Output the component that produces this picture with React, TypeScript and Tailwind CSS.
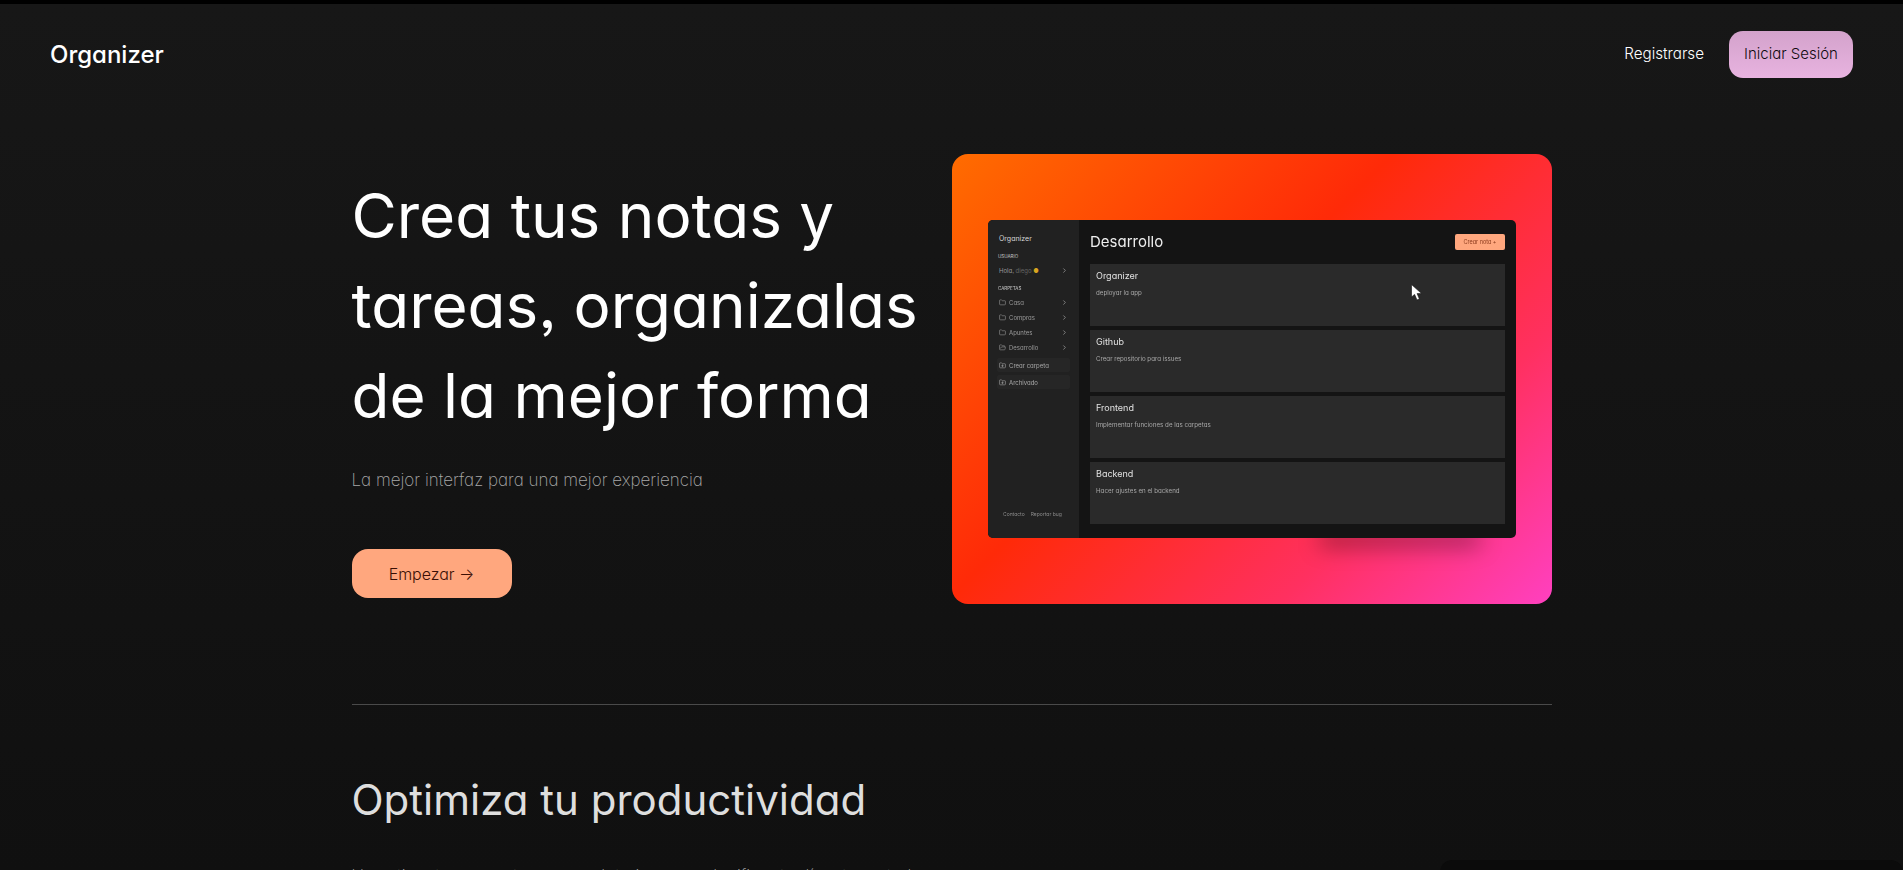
import { ChevronRight, Folder, FolderOpen, FolderPlus } from 'lucide-react';

const folders = [
  { name: 'Casa', open: false },
  { name: 'Compras', open: false },
  { name: 'Apuntes', open: false },
  { name: 'Desarrollo', open: true },
];

const notes = [
  { title: 'Organizer', text: 'deployar la app' },
  { title: 'Github', text: 'Crear repositorio para issues' },
  { title: 'Frontend', text: 'Implementar funciones de las carpetas' },
  { title: 'Backend', text: 'Hacer ajustes en el backend' },
];

function AppPreview() {
  return (
    <div className="relative w-[528px] h-[318px]">
      <div className="absolute -bottom-[8px] right-[36px] h-[14px] w-[160px] bg-black/40 blur-[11px]" />
      <div className="relative flex h-full overflow-hidden rounded-[5px] bg-[#141414] blur-[0.4px]">
        <aside className="flex w-[91px] shrink-0 flex-col bg-[#212121] pt-[14px]">
          <p className="ml-[11px] h-[10px] text-[7px] leading-[10px] text-[#d8d8d8]">Organizer</p>
          <p className="ml-[10px] mt-[10px] h-[6px] text-[4.5px] leading-[6px] text-[#c8c8c8]">USUARIO</p>
          <div className="mt-[5px] flex h-[10px] items-center justify-between pl-[11px] pr-[11px] text-[6px] text-[#9a9a9a]">
            <span>
              Hola, <span className="text-[#666]">diego</span> <span className="text-[#d9a520]">●</span>
            </span>
            <ChevronRight className="h-[7px] w-[7px] text-[#bbb]" />
          </div>
          <p className="ml-[10px] mt-[11px] h-[6px] text-[4.5px] leading-[6px] text-[#c8c8c8]">CARPETAS</p>
          <div className="mt-[3px]">
            {folders.map((f) => (
              <div key={f.name} className="flex h-[15px] items-center justify-between pl-[11px] pr-[11px] text-[6px] text-[#9a9a9a]">
                <span className="flex items-center gap-[3px]">
                  {f.open ? <FolderOpen className="h-[7px] w-[7px]" /> : <Folder className="h-[7px] w-[7px]" />}
                  {f.name}
                </span>
                <ChevronRight className="h-[7px] w-[7px] text-[#bbb]" />
              </div>
            ))}
          </div>
          {['Crear carpeta', 'Archivado'].map((label) => (
            <div
              key={label}
              className="mx-[9px] mt-[3px] flex h-[14px] items-center gap-[3px] rounded-[2px] bg-[#262626] pl-[2px] text-[6px] text-[#a8a8a8]"
            >
              <FolderPlus className="h-[7px] w-[7px]" />
              {label}
            </div>
          ))}
          <div className="mt-auto flex gap-[6px] pb-[21px] pl-[15px] text-[5px] leading-[6px] text-[#8a8a8a]">
            <span>Contacto</span>
            <span>Reportar bug</span>
          </div>
        </aside>
        <main className="flex-1 px-[11px] pt-[14px]">
          <div className="flex h-[16px] items-center justify-between">
            <h3 className="text-[15px] text-[#eeeeee]">Desarrollo</h3>
            <button className="h-[16px] w-[50px] rounded-[2px] bg-[#ffa77e] text-[5.5px] text-[#8a3a1c]">Crear nota +</button>
          </div>
          <div className="mt-[14px] flex flex-col gap-[4px]">
            {notes.map((n) => (
              <div key={n.title} className="h-[62px] bg-[#2a2a2a] px-[6px] pt-[6px]">
                <p className="h-[12px] text-[9px] leading-[12px] text-[#e2e2e2]">{n.title}</p>
                <p className="mt-[7px] h-[8px] text-[6.2px] leading-[8px] text-[#a8a8a8]">{n.text}</p>
              </div>
            ))}
          </div>
        </main>
      </div>
      {/* mouse pointer caught in the recording */}
      <svg className="absolute left-[423px] top-[64px] h-[17px] w-[12px]" viewBox="0 0 12 17">
        <path d="M0.5 0.5 L0.5 13 L3.6 10.4 L6 16 L8.4 15 L6.1 9.6 L10.6 9.6 Z" fill="#fff" stroke="#111" strokeWidth="0.6" />
      </svg>
    </div>
  );
}

export default function App() {
  return (
    <div className="h-screen overflow-hidden border-t-4 border-black bg-gradient-to-b from-[#171717] to-[#101010] [font-family:Inter,sans-serif] [font-feature-settings:'cv11','ss03']">
      <header className="flex items-center justify-between px-[50px] pt-[27px]">
        <span className="text-[24px] font-medium text-white">Organizer</span>
        <div className="flex items-center gap-[25px]">
          <a className="text-[15.2px] font-light text-white">Registrarse</a>
          <button className="h-[47px] w-[124px] rounded-[14px] bg-gradient-to-b from-[#d3a2cb] to-[#e8b3e0] text-[15px] font-light text-[#0f0a0e]">
            Iniciar Sesión
          </button>
        </div>
      </header>

      <div className="mx-auto w-[1200px]">
        <section className="mt-[76px] flex justify-between">
          <div className="pt-[17px]">
            <h1 className="text-[62px] leading-[90px] text-white">
              Crea tus notas y
              <br />
              tareas, organizalas
              <br />
              de la mejor forma
            </h1>
            <p className="mt-[26px] text-[17px] leading-[27px] font-extralight text-[#a8a8a8]">La mejor interfaz para una mejor experiencia</p>
            <button className="mt-[55px] h-[49px] w-[160px] rounded-[16px] bg-[#ffa77e] text-[16px] font-light text-[#3a0f05]">Empezar →</button>
          </div>
          <div className="flex h-[450px] w-[600px] items-center justify-center rounded-[16px] bg-[linear-gradient(135deg,#ff6c00_0%,#ff2a08_42%,#ff3060_74%,#ff40c0_100%)] pl-[1px]">
            <AppPreview />
          </div>
        </section>

        <hr className="mt-[100px] border-t border-[#4a4a4a]" />

        <section className="mt-[65px]">
          <h2 className="text-[42px] leading-[60px] text-[#dedede]">Optimiza tu productividad</h2>
          <div className="mt-[30px] flex items-start">
            <p className="mt-[3px] w-[620px] shrink-0 text-[17px] leading-[27px] font-extralight text-[#a8a8a8]">
              Usa etiquetas, carpetas y recordatorios para planificar tu día y tener todo a mano.
            </p>
            <div className="ml-[468px] h-[240px] w-[463px] shrink-0 rounded-[12px] bg-[#0b0b0b]" />
          </div>
        </section>
      </div>
    </div>
  );
}
